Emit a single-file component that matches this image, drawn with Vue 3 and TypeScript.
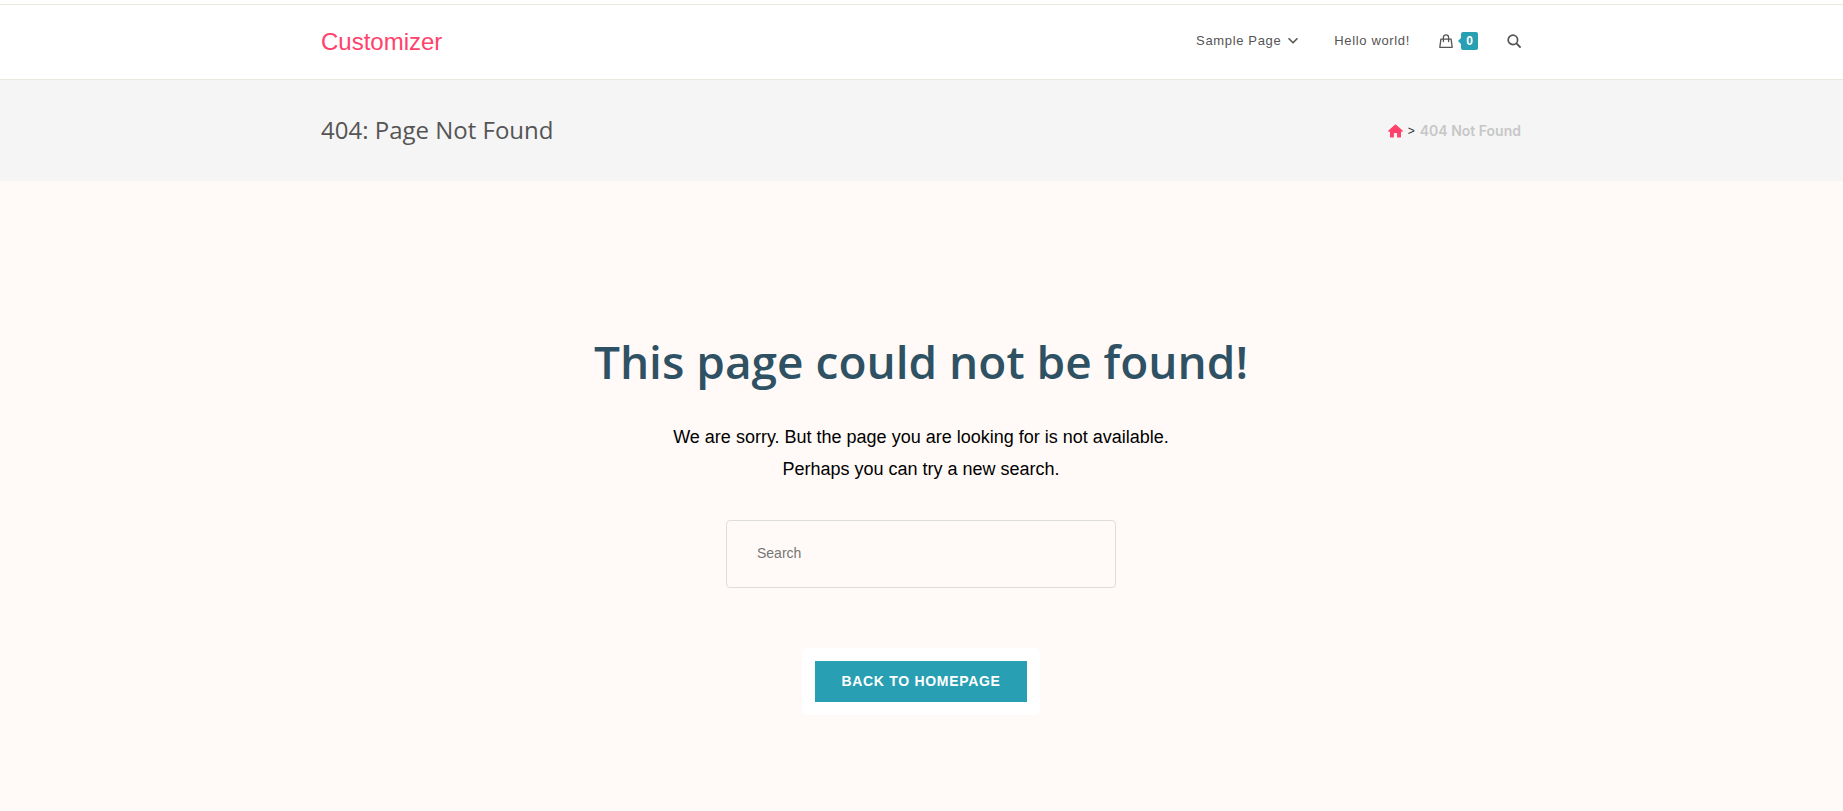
<script setup lang="ts">
import { ref } from 'vue'

const query = ref('')
const cartCount = ref(0)
</script>

<template>
  <div class="page">
    <div class="top-bar"></div>
    <header class="site-header">
      <div class="container bar">
        <a class="logo" href="#">Customizer</a>
        <nav class="nav" aria-label="Main">
          <a class="nav-link" href="#">
            <span>Sample Page</span>
            <svg class="chevron" viewBox="0 0 10 6" width="10" height="6" aria-hidden="true">
              <path d="M1 .8 5 4.8 9 .8" fill="none" stroke="currentColor" stroke-width="1.6" stroke-linecap="round" stroke-linejoin="round" />
            </svg>
          </a>
          <a class="nav-link" href="#">Hello world!</a>
          <a class="nav-link cart" href="#" aria-label="Cart">
            <svg viewBox="0 0 14 14" width="14" height="14" aria-hidden="true">
              <path d="M1.9 5.2H12.1L13.2 13.3H.8ZM4.4 7.6V3.4A2.6 2.6 0 0 1 9.6 3.4V7.6" fill="none" stroke="currentColor" stroke-width="1.3" stroke-linejoin="round" stroke-linecap="round" />
            </svg>
            <span class="count">{{ cartCount }}</span>
          </a>
          <button class="search-toggle" type="button" aria-label="Search website">
            <svg viewBox="0 0 14 14" width="14" height="14" aria-hidden="true">
              <circle cx="5.9" cy="5.9" r="4.7" fill="none" stroke="currentColor" stroke-width="1.7" />
              <path d="M9.4 9.4 13 13" fill="none" stroke="currentColor" stroke-width="1.8" stroke-linecap="round" />
            </svg>
          </button>
        </nav>
      </div>
    </header>

    <div class="page-header">
      <div class="container bar">
        <h1 class="page-title">404: Page Not Found</h1>
        <nav class="crumbs" aria-label="Breadcrumbs">
          <a class="home" href="#" aria-label="Home">
            <svg viewBox="0 0 15 14" width="15" height="14" aria-hidden="true">
              <path d="M6.9.7a.9.9 0 0 1 1.2 0L14.6 6.5c.6.5.2 1.3-.5 1.3H13V12.8c0 .5-.3.8-.8.8H9.8c-.4 0-.7-.3-.7-.7V9.8c0-.5-.3-.8-.8-.8H6.7c-.5 0-.8.3-.8.8v3.1c0 .4-.3.7-.7.7H2.8c-.5 0-.8-.3-.8-.8V7.8H.9C.2 7.8-.2 7 .4 6.5Z" fill="currentColor" />
            </svg>
          </a>
          <span class="separator">&gt;</span>
          <span class="current">404 Not Found</span>
        </nav>
      </div>
    </div>

    <main class="container error">
      <h2 class="error-title">This page could not be found!</h2>
      <p class="error-text">
        We are sorry. But the page you are looking for is not available.<br />
        Perhaps you can try a new search.
      </p>
      <form class="search-form" role="search" @submit.prevent>
        <input v-model="query" class="search-input" type="search" placeholder="Search" aria-label="Search" />
      </form>
      <div class="button-frame">
        <a class="button" href="#">Back to homepage</a>
      </div>
    </main>
  </div>
</template>

<style>
html,
body {
  background: #fffaf7;
}
</style>

<style scoped>
.page {
  font-family: "Liberation Sans", Arial, sans-serif;
  color: #000;
  background: #fffaf7;
}
.container {
  box-sizing: border-box;
  max-width: 1201px;
  margin: 0 auto;
  padding-right: 1px;
}
.bar {
  display: flex;
  align-items: center;
  justify-content: space-between;
}
a {
  color: inherit;
  text-decoration: none;
}
svg {
  display: block;
}
.top-bar {
  height: 4px;
  background: #fff;
  border-bottom: 1px solid #e9e9e0;
}
.site-header {
  background: #fff;
  border-bottom: 1px solid #e9e9e0;
}
.site-header .bar {
  min-height: 74px;
}
.logo {
  font-size: 24px;
  line-height: 28px;
  color: #ff416c;
}
.nav {
  display: flex;
  align-items: center;
  padding-bottom: 2px;
  color: #555;
}
.nav-link {
  display: flex;
  align-items: center;
  font-size: 13px;
  line-height: 18px;
  letter-spacing: 0.05em;
  margin-right: 29px;
}
.nav-link:first-child {
  margin-right: 36px;
}
.chevron {
  margin-left: 7px;
}
.cart {
  gap: 8px;
}
.count {
  position: relative;
  min-width: 17px;
  border-radius: 2px;
  background: #289fb2;
  color: #fff;
  font-size: 12px;
  font-weight: 700;
  letter-spacing: 0;
  text-align: center;
}
.count::before {
  content: "";
  position: absolute;
  top: 6px;
  left: -3px;
  border: solid transparent;
  border-width: 3px 3px 3px 0;
  border-right-color: #289fb2;
}
.search-toggle {
  padding: 0;
  border: 0;
  background: none;
  color: inherit;
  cursor: pointer;
}
.page-header {
  background: #f5f5f5;
}
.page-header .bar {
  min-height: 101px;
}
.page-title {
  margin: 0;
  padding-bottom: 2px;
  font-family: "Open Sans", "Noto Sans", sans-serif;
  font-size: 24px;
  font-weight: 400;
  line-height: 28px;
  color: #555;
}
.crumbs {
  display: flex;
  align-items: center;
  gap: 5px;
  font-size: 14px;
  line-height: 18px;
}
.home {
  color: #ff416c;
}
.separator {
  font-size: 12px;
  color: #333;
}
.current {
  font-family: Inter, sans-serif;
  font-weight: 600;
  color: #c7c7c7;
}
.error {
  display: flex;
  flex-direction: column;
  align-items: center;
  padding-top: 150px;
  padding-bottom: 94px;
  text-align: center;
}
.error-title {
  margin: 0 0 30px;
  font-family: "Open Sans", "Noto Sans", sans-serif;
  font-size: 46px;
  font-weight: 600;
  line-height: 60px;
  color: #2f5164;
}
.error-text {
  margin: 0;
  font-size: 18px;
  line-height: 32px;
}
.search-form {
  width: 100%;
  max-width: 390px;
  margin: 35px 0 60px;
}
.search-input {
  display: block;
  box-sizing: border-box;
  width: 100%;
  height: 68px;
  padding: 0 30px 3px;
  border: 1px solid #ddd;
  border-radius: 4px;
  outline: 0;
  background: transparent;
  appearance: none;
  font-family: inherit;
  font-size: 14px;
  color: #333;
}
.search-input::placeholder {
  color: #757575;
  opacity: 1;
}
.button-frame {
  padding: 13px;
  border-radius: 5px;
  background: #fff;
}
.button {
  display: block;
  padding: 10px 26px 11px;
  background: #289fb2;
  color: #fff;
  font-size: 14px;
  font-weight: 700;
  line-height: 20px;
  letter-spacing: 0.05em;
  text-transform: uppercase;
}
</style>
